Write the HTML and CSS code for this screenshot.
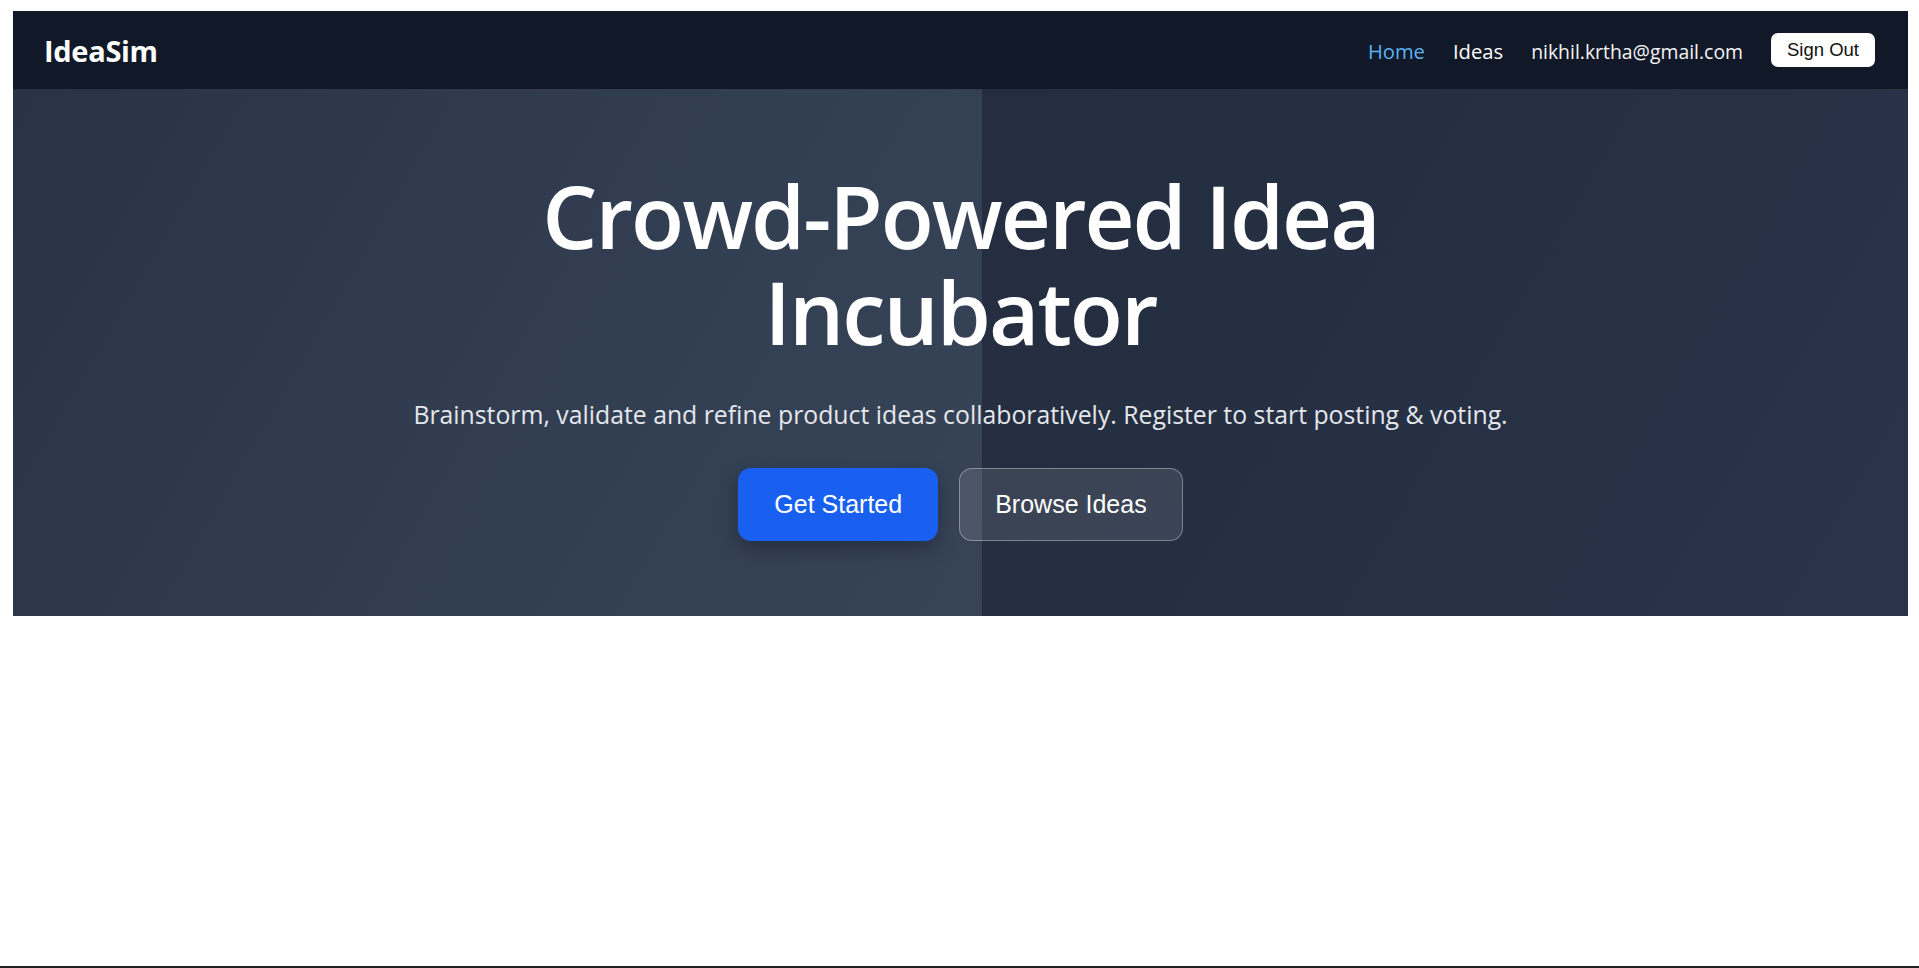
FILE: index.html
```html
<!DOCTYPE html>
<html lang="en">
<head>
<meta charset="utf-8">
<title>IdeaSim</title>
<link rel="stylesheet" href="styles.css">
</head>
<body>
<div class="page">
  <header class="navbar">
    <a class="logo" href="#">IdeaSim</a>
    <nav class="nav-links">
      <a class="nav-link active" href="#">Home</a>
      <a class="nav-link" href="#">Ideas</a>
      <span class="nav-email">nikhil.krtha@gmail.com</span>
      <button class="signout">Sign Out</button>
    </nav>
  </header>
  <section class="hero">
    <h1 class="hero-title">Crowd-Powered Idea Incubator</h1>
    <p class="hero-sub">Brainstorm, validate and refine product ideas collaboratively. Register to start posting &amp; voting.</p>
    <div class="hero-actions">
      <a class="btn btn-primary" href="#">Get Started</a>
      <a class="btn btn-ghost" href="#">Browse Ideas</a>
    </div>
  </section>
</div>
<div class="frame-edge"></div>
</body>
</html>
```

FILE: styles.css
```css
* { box-sizing: border-box; }

html, body {
  margin: 0;
  padding: 0;
  background: #ffffff;
}

body {
  font-family: "Open Sans", "Noto Sans", sans-serif;
  color: #ffffff;
}

.page {
  padding: 11px 11px 0 13px;
}

.navbar {
  height: 78px;
  background: #111827;
  display: flex;
  align-items: center;
  justify-content: space-between;
  padding: 0 33px 0 31px;
}

.logo {
  color: #ffffff;
  text-decoration: none;
  font-weight: 700;
  font-size: 29px;
  letter-spacing: -0.3px;
}

.nav-links {
  display: flex;
  align-items: center;
  gap: 28px;
}

.nav-link {
  color: #ffffff;
  text-decoration: none;
  font-size: 20.2px;
  padding-top: 2px;
}

.nav-link.active {
  color: #5ab4f5;
}

.nav-email {
  color: #f3f4f6;
  font-size: 19.4px;
  padding-top: 2px;
}

.signout {
  font-family: "Liberation Sans", Arial, sans-serif;
  font-size: 18.5px;
  color: #111111;
  background: #ffffff;
  border: none;
  border-radius: 7px;
  height: 34px;
  padding: 0 16px;
}

.hero {
  height: 527px;
  padding: 78px 20px 0;
  text-align: center;
  background-image:
    linear-gradient(120deg, #293345 0%, #323e52 60%, #374458 100%),
    linear-gradient(120deg, #202939 0%, #242e40 50%, #29334a 100%);
  background-size: 969px 100%, 100% 100%;
  background-repeat: no-repeat;
}

.hero-title {
  margin: 0 auto;
  max-width: 1000px;
  font-size: 87px;
  line-height: 96px;
  font-weight: 600;
  letter-spacing: -2px;
}

.hero-sub {
  margin: 37px 0 0;
  font-size: 24.8px;
  line-height: 36px;
  color: #e5e7eb;
}

.hero-actions {
  margin-top: 36px;
  display: flex;
  justify-content: center;
  gap: 21px;
}

.btn {
  font-family: "Liberation Sans", Arial, sans-serif;
  font-size: 25px;
  line-height: 31px;
  padding: 20px 35px;
  border-radius: 13px;
  text-decoration: none;
  color: #ffffff;
  border: 1px solid transparent;
}

.btn-primary {
  background: #1a60f0;
  box-shadow: 0 8px 18px rgba(10, 15, 30, 0.35);
}

.btn-ghost {
  background: rgba(255, 255, 255, 0.1);
  border-color: rgba(255, 255, 255, 0.35);
}

.frame-edge {
  position: fixed;
  left: 0;
  right: 0;
  bottom: 0;
  height: 2px;
  background: #202020;
}
```
